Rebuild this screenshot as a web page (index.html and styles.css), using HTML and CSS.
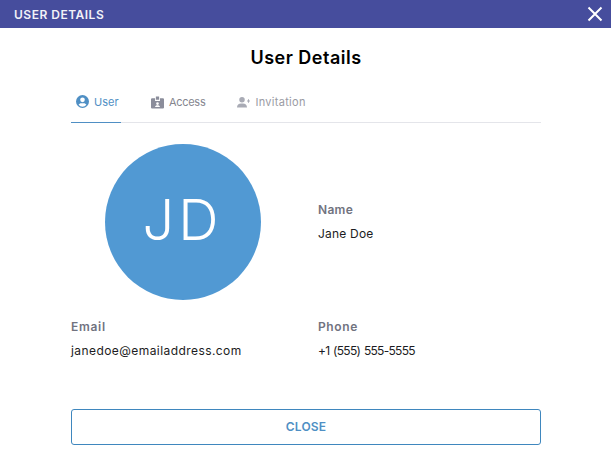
FILE: index.html
```html
<!DOCTYPE html>
<html lang="en">
<head>
<meta charset="utf-8">
<title>User Details</title>
<link rel="stylesheet" href="styles.css">
</head>
<body>
<header class="bar">
  <span class="bar-title">USER DETAILS</span>
  <svg class="bar-close" width="16" height="16" viewBox="0 0 16 16"><path d="M1.5 1.500L14.500 14.500M14.500 1.500L1.500 14.500" stroke="#fff" stroke-width="2" fill="none"/></svg>
</header>
<main class="content">
  <h1 class="title">User Details</h1>
  <nav class="tabs">
    <div class="tab tab-active">
      <svg class="tab-icon" width="13" height="13" viewBox="0 0 24 24"><path fill="#4f8fc4" d="M12 0a12 12 0 1 0 0 24 12 12 0 0 0 0-24zm0 4.600a4.300 4.300 0 1 1 0 8.600 4.300 4.300 0 0 1 0-8.600zm0 16.900a9.400 9.400 0 0 1-7.200-3.400c.9-1.800 2.800-3 5-3h4.400c2.200 0 4.100 1.200 5 3a9.400 9.400 0 0 1-7.200 3.400z"/></svg>
      <span>User</span>
    </div>
    <div class="tab tab-access">
      <svg class="tab-icon" width="13" height="13" viewBox="0 0 24 24"><path fill="#8b8d9b" d="M9 1h6v6H9zM2 4h5.500v5h9V4H22a2 2 0 0 1 2 2v15a2 2 0 0 1-2 2H2a2 2 0 0 1-2-2V6a2 2 0 0 1 2-2zm10 7.500a2.500 2.500 0 1 0 0 5 2.500 2.500 0 0 0 0-5zM7.500 20.500h9c0-2-2-3.200-4.500-3.200s-4.500 1.200-4.500 3.200z"/></svg>
      <span>Access</span>
    </div>
    <div class="tab tab-invite">
      <svg class="tab-icon" width="13" height="12" viewBox="0 0 26 24"><path fill="#a9abb5" d="M10 2a5.500 5.500 0 1 1 0 11 5.500 5.500 0 0 1 0-11zM0 23c0-5 3.500-8 8-8h4c4.500 0 8 3 8 8zM20 9h2V6.500h2V9h2v2h-2v2.500h-2V11h-2z"/></svg>
      <span>Invitation</span>
    </div>
  </nav>
  <section class="details">
    <div class="avatar-cell"><div class="avatar">JD</div></div>
    <div class="field field-name">
      <div class="label">Name</div>
      <div class="value">Jane Doe</div>
    </div>
    <div class="field field-lower">
      <div class="label label-email">Email</div>
      <div class="value value-email">janedoe@emailaddress.com</div>
    </div>
    <div class="field field-lower">
      <div class="label label-phone">Phone</div>
      <div class="value value-phone">+1 (555) 555-5555</div>
    </div>
  </section>
  <button class="close-btn" type="button">CLOSE</button>
</main>
</body>
</html>
```
FILE: styles.css
```css
* { box-sizing: border-box; }
html, body { margin: 0; padding: 0; }
body {
  width: 611px;
  height: 465px;
  overflow: hidden;
  background: #fff;
  font-family: "Inter", "Liberation Sans", sans-serif;
  color: #1c1c22;
}
.bar {
  height: 28px;
  background: #464d9d;
  display: flex;
  align-items: center;
  justify-content: space-between;
  padding: 0 8px 0 14px;
}
.bar-title {
  color: #f2f2f8;
  font-size: 12px;
  font-weight: 600;
  letter-spacing: 0.5px;
}
.content {
  width: 470px;
  margin-left: 71px;
  display: flex;
  flex-direction: column;
}
.title {
  margin: 18px 0 0;
  height: 24px;
  line-height: 24px;
  text-align: center;
  font-size: 18px;
  font-weight: 600;
  letter-spacing: 0.5px;
  color: #000;
}
.tabs {
  margin-top: 22px;
  height: 31px;
  display: flex;
  gap: 25px;
  border-bottom: 1px solid #e4e5ea;
}
.tab {
  height: 31px;
  padding: 0 1px 11px 5px;
  display: flex;
  align-items: center;
  gap: 5px;
  font-size: 11px;
  white-space: nowrap;
  color: #85868f;
}
.tab-icon { flex: none; }
.tab-active {
  width: 50px;
  color: #4f8fc4;
  border-bottom: 1px solid #4f8fc4;
}
.tab-access span { letter-spacing: -0.3px; }
.tab-invite { color: #9a9ba4; margin-left: 1px; }
.tab-invite span { letter-spacing: 0.3px; }
.details {
  margin-top: 21px;
  display: grid;
  grid-template-columns: 247px 223px;
  grid-template-rows: 156px auto;
}
.avatar-cell { padding-left: 34px; }
.avatar {
  width: 156px;
  height: 156px;
  border-radius: 50%;
  background: #5199d3;
  color: #fff;
  display: flex;
  align-items: center;
  justify-content: center;
  font-size: 56px;
  font-weight: 300;
  letter-spacing: 4px;
  padding-right: 1px;
  padding-bottom: 4px;
}
.field-name { align-self: center; }
.field-lower { margin-top: 18px; }
.label {
  height: 18px;
  line-height: 18px;
  font-size: 12px;
  font-weight: 600;
  color: #71737f;
  letter-spacing: 0.3px;
}
.label-email { letter-spacing: 0.7px; }
.label-phone { letter-spacing: 0.6px; }
.value {
  margin-top: 6px;
  height: 18px;
  line-height: 18px;
  font-size: 12px;
  color: #1c1c22;
  letter-spacing: 0.2px;
}
.value-email { letter-spacing: 0.43px; }
.value-phone { letter-spacing: -0.7px; word-spacing: 1px; }
.close-btn {
  margin-top: 49px;
  height: 36px;
  width: 470px;
  padding: 0 0 1px;
  background: #fff;
  border: 1px solid #3f87be;
  border-radius: 3px;
  color: #4f8fc4;
  font-family: inherit;
  font-size: 12px;
  font-weight: 600;
  letter-spacing: 0.2px;
}
```
